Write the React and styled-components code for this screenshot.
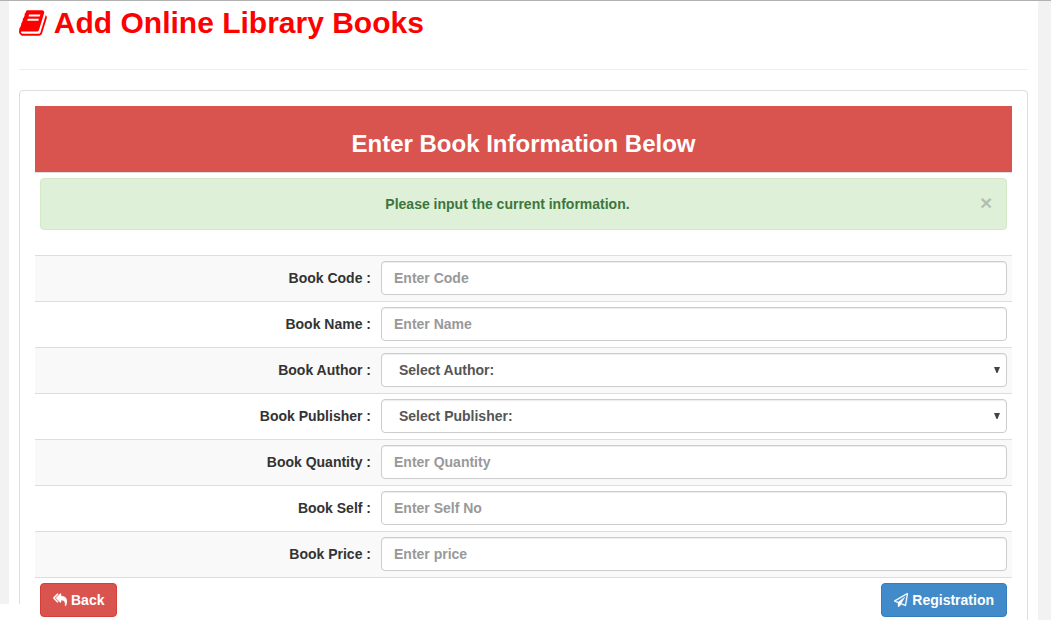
import React from "react";
import styled, { createGlobalStyle } from "styled-components";

const GlobalStyle = createGlobalStyle`
  *, *::before, *::after { box-sizing: border-box; }
  body {
    margin: 0;
    background: #f2f2f2;
    color: #333;
    font: 14px/20px "Liberation Sans", Arial, sans-serif;
  }
  button, input, select { font: inherit; }
`;

const Viewport = styled.div`
  height: 100vh;
  overflow-y: auto;
  scrollbar-width: none;
  border-top: 1px solid #b1b1b1;
`;

const Page = styled.main`
  min-height: 100%;
  margin: 0 13px 0 9px;
  padding: 0 10px;
  background: #fff;
`;

const PageTitle = styled.h1`
  display: flex;
  align-items: center;
  gap: 7px;
  margin: 0;
  padding: 5px 0 29px;
  border-bottom: 1px solid #eee;
  color: #f00;
  font-size: 30px;
  line-height: 34px;
`;

const Glyph = styled.svg`
  display: block;
  flex: none;
  height: ${(p) => p.$size}px;
  fill: currentColor;
  stroke: currentColor;
  stroke-width: ${(p) => p.$weight};
`;

const Panel = styled.section`
  margin-top: 20px;
  padding: 15px;
  border: 1px solid #ddd;
  border-radius: 4px;
`;

const Banner = styled.h2`
  margin: 0;
  padding: 24px 5px 14px;
  background: #d9534f;
  color: #fff;
  font-size: 24px;
  line-height: 28px;
  text-align: center;
`;

const Notice = styled.div`
  padding: 5px 5px 25px;
  border-top: 1px solid #ddd;
`;

const Alert = styled.div`
  display: flex;
  align-items: center;
  gap: 21px;
  padding: 15px 14px 15px 15px;
  border: 1px solid #d6e9c6;
  border-radius: 4px;
  background: #dff0d8;
  color: #3c763d;
  font-weight: bold;
`;

const AlertText = styled.span`
  flex: 1;
  text-align: center;
`;

const CloseButton = styled.button`
  width: 12px;
  height: 20px;
  padding: 0 0 2px;
  border: 0;
  background: none;
  color: #000;
  font-size: 21px;
  font-weight: bold;
  line-height: 18px;
  text-shadow: 0 1px 0 #fff;
  opacity: 0.2;
  cursor: pointer;
`;

const Row = styled.div`
  display: grid;
  grid-template-columns: 341fr 636fr;
  padding: 5px 0 6px;
  border-top: 1px solid #ddd;
  background: ${(p) => (p.$striped ? "#f9f9f9" : "#fff")};
`;

const Label = styled.label`
  padding: 0 5px;
  font-weight: bold;
  line-height: 34px;
  text-align: right;
`;

const Control = styled.div`
  position: relative;
  padding: 0 5px;
`;

const Field = styled.input`
  display: block;
  width: 100%;
  height: 34px;
  padding: 6px ${(p) => (p.as ? 17 : 12)}px;
  border: 1px solid #ccc;
  border-radius: 4px;
  background: #fff;
  box-shadow: inset 0 1px 1px rgba(0, 0, 0, 0.075);
  color: #555;
  font-weight: bold;
  appearance: none;
  &::placeholder { color: #999; opacity: 1; }
`;

const Arrow = styled.svg`
  position: absolute;
  top: 14px;
  right: 12px;
  width: 6px;
  height: 6px;
  fill: #444;
  pointer-events: none;
`;

const Actions = styled.div`
  display: flex;
  justify-content: space-between;
  padding: 5px;
  border-top: 1px solid #ddd;
`;

const ActionButton = styled.button`
  display: flex;
  align-items: center;
  gap: 4px;
  height: 34px;
  padding: 6px 12px;
  border: 1px solid ${(p) => (p.$primary ? "#357ebd" : "#d43f3a")};
  border-radius: 4px;
  background: ${(p) => (p.$primary ? "#428bca" : "#d9534f")};
  color: #fff;
  font-weight: bold;
  cursor: pointer;
`;

const StatusStrip = styled.div`
  position: absolute;
  bottom: 0;
  left: 0;
  width: 35px;
  height: 16px;
  background: #fff;
`;

const glyphs = {
  book: {
    width: 1664,
    weight: 0,
    d: "M1639 1058q40 -57 18 -129l-275 -906q-19 -64 -76.5 -107.5t-122.5 -43.5h-923q-77 0 -148.5 53.5t-99.5 131.5q-24 67 -2 127q0 4 3 27t4 37q1 8 -3 21.5t-3 19.5q2 11 8 21t16.5 23.5t16.5 23.5q23 38 45 91.5t30 91.5q3 10 0.5 30t-0.5 28q3 11 17 28t17 23q21 36 42 92t25 90q1 9 -2.5 32t0.5 28q4 13 22 30.5t22 22.5q19 26 42.5 84.5t27.5 96.5q1 8 -3 25.5t-2 26.5q2 8 9 18t18 23t17 21q8 12 16.5 30.5t15 35t16 36t19.5 32t26.5 23.5t36 11.5t47.5 -5.5l-1 -3q38 9 51 9h761q74 0 114 -56t18 -130l-274 -906q-36 -119 -71.5 -153.5t-128.5 -34.5h-869q-27 0 -38 -15q-11 -16 -1 -43q24 -70 144 -70h923q29 0 56 15.5t35 41.5l300 987q7 22 5 57q38 -15 59 -43zM575 1056q-4 -13 2 -22.5t20 -9.5h608q13 0 25.5 9.5t16.5 22.5l21 64q4 13 -2 22.5t-20 9.5h-608q-13 0 -25.5 -9.5t-16.5 -22.5zM492 800q-4 -13 2 -22.5t20 -9.5h608q13 0 25.5 9.5t16.5 22.5l21 64q4 13 -2 22.5t-20 9.5h-608q-13 0 -25.5 -9.5t-16.5 -22.5z",
  },
  replyAll: {
    width: 1792,
    weight: 60,
    d: "M640 454v-70q0 -42 -39 -59q-13 -5 -25 -5q-27 0 -45 19l-512 512q-19 19 -19 45t19 45l512 512q29 31 70 14q39 -17 39 -59v-69l-397 -398q-19 -19 -19 -45t19 -45zM1792 416q0 -58 -17 -133.5t-38.5 -138t-48 -125t-40.5 -90.5l-20 -40q-8 -17 -28 -17q-6 0 -9 1q-25 8 -23 34q43 400 -106 565q-64 71 -170.5 110.5t-267.5 52.5v-251q0 -42 -39 -59q-13 -5 -25 -5q-27 0 -45 19l-512 512q-19 19 -19 45t19 45l512 512q29 31 70 14q39 -17 39 -59v-262q411 -28 599 -221q169 -173 169 -509z",
  },
  paperPlane: {
    width: 1792,
    weight: 40,
    d: "M1764 1525q33 -24 27 -64l-256 -1536q-5 -29 -32 -45q-14 -8 -31 -8q-11 0 -24 5l-527 215l-298 -327q-18 -21 -47 -21q-14 0 -23 4q-19 7 -30 23.5t-11 36.5v452l-472 193q-37 14 -40 55q-3 39 32 59l1664 960q35 21 68 -2zM1422 26l221 1323l-1434 -827l336 -137l863 639l-478 -797z",
  },
};

function Icon({ name, size }) {
  const { width, weight, d } = glyphs[name];
  return (
    <Glyph $size={size} $weight={weight} viewBox={`0 -1536 ${width} 1792`} aria-hidden="true">
      <path d={d} transform="scale(1 -1)" />
    </Glyph>
  );
}

const fields = [
  { id: "code", label: "Book Code :", placeholder: "Enter Code" },
  { id: "name", label: "Book Name :", placeholder: "Enter Name" },
  { id: "author", label: "Book Author :", option: "Select Author:" },
  { id: "publisher", label: "Book Publisher :", option: "Select Publisher:" },
  { id: "quantity", label: "Book Quantity :", placeholder: "Enter Quantity" },
  { id: "self", label: "Book Self :", placeholder: "Enter Self No" },
  { id: "price", label: "Book Price :", placeholder: "Enter price" },
];

export default function App() {
  return (
    <Viewport>
      <GlobalStyle />
      <Page>
        <PageTitle>
          <Icon name="book" size={30} />
          Add Online Library Books
        </PageTitle>
        <Panel>
          <Banner>Enter Book Information Below</Banner>
          <Notice>
            <Alert role="status">
              <AlertText>Please input the current information.</AlertText>
              <CloseButton type="button" aria-label="Close">×</CloseButton>
            </Alert>
          </Notice>
          <form onSubmit={(e) => e.preventDefault()}>
            {fields.map(({ id, label, placeholder, option }, i) => (
              <Row key={id} $striped={i % 2 === 0}>
                <Label htmlFor={id}>{label}</Label>
                <Control>
                  {option ? (
                    <>
                      <Field as="select" id={id} name={id}>
                        <option>{option}</option>
                      </Field>
                      <Arrow viewBox="0 0 6 6" aria-hidden="true">
                        <path d="M0 0h6L3.5 6h-1z" />
                      </Arrow>
                    </>
                  ) : (
                    <Field id={id} name={id} placeholder={placeholder} />
                  )}
                </Control>
              </Row>
            ))}
            <Actions>
              <ActionButton type="button">
                <Icon name="replyAll" size={14} />
                Back
              </ActionButton>
              <ActionButton type="submit" $primary>
                <Icon name="paperPlane" size={14} />
                Registration
              </ActionButton>
            </Actions>
          </form>
        </Panel>
      </Page>
      <StatusStrip />
    </Viewport>
  );
}
